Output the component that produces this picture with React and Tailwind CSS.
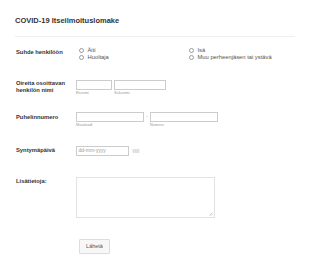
import React from 'react';

const Radio = ({ label }) => (
    <label className="flex items-center h-[7px] gap-[4px]">
        <span className="w-[4.5px] h-[4.5px] rounded-full border-[0.5px] border-[#9a9a9a] bg-white shrink-0" />
        <span className="text-[5.8px] leading-[7px] text-[#555] whitespace-nowrap">{label}</span>
    </label>
);

const Row = ({ label, children, className }) => (
    <div className={`flex ${className}`}>
        <div className="w-[60px] shrink-0 pl-[16px] text-[5.8px] leading-[7px] font-bold text-[#333] whitespace-nowrap">{label}</div>
        {children}
    </div>
);

const Field = ({ w, sub }) => (
    <div className="flex flex-col">
        <div className={`h-[10px] border-[0.5px] border-[#ccc] bg-white ${w}`} />
        <span className="text-[3.8px] leading-[5px] text-[#999] mt-[1px]">{sub}</span>
    </div>
);

export default function App() {
    return (
        <div className="w-[310px] h-[269px] bg-white flex flex-col" style={{ fontFamily: '"Liberation Sans", Arial, sans-serif' }}>
            <h1 className="pl-[15px] pt-[17px] text-[7.5px] leading-[8px] font-bold text-[#333]">COVID-19 Itseilmoituslomake</h1>
            <div className="ml-[15px] mt-[11px] w-[280px] h-px bg-[#eeeeee]" />

            <Row label={<span className="block pt-[1.5px]">Suhde henkilöön</span>} className="mt-[10px] items-start">
                <div className="flex pl-[19px]">
                    <div className="flex flex-col w-[110px]">
                        <Radio label="Äiti" />
                        <Radio label="Huoltaja" />
                    </div>
                    <div className="flex flex-col">
                        <Radio label="Isä" />
                        <Radio label="Muu perheenjäsen tai ystävä" />
                    </div>
                </div>
            </Row>

            <Row label={<>Oireita osoittavan<br />henkilön nimi</>} className="mt-[19px] items-start">
                <div className="flex gap-[2px] pl-[16px]">
                    <Field w="w-[36px]" sub="Etunimi" />
                    <Field w="w-[52px]" sub="Sukunimi" />
                </div>
            </Row>

            <Row label={<span className="block pt-[1.5px]">Puhelinnumero</span>} className="mt-[16px] items-start">
                <div className="flex pl-[16px] items-start">
                    <Field w="w-[68px]" sub="Maakoodi" />
                    <span className="w-[6px] h-[10px] flex items-center justify-center text-[5px] text-[#999]">-</span>
                    <Field w="w-[68px]" sub="Numero" />
                </div>
            </Row>

            <Row label={<span className="block pt-[1px]">Syntymäpäivä</span>} className="mt-[18px] items-start">
                <div className="flex pl-[16px] items-center gap-[2px]">
                    <div className="w-[53px] h-[10px] border-[0.5px] border-[#ccc] flex items-center pl-[1.5px] text-[5px] text-[#999]">dd-mm-yyyy</div>
                    <svg width="8" height="4" viewBox="0 0 8 4" className="ml-[1px]">
                        <line x1="0.5" y1="1" x2="7.5" y2="1" stroke="#aaa" strokeWidth="0.7" />
                        <line x1="0.5" y1="3" x2="7.5" y2="3" stroke="#aaa" strokeWidth="0.7" />
                    </svg>
                </div>
            </Row>

            <Row label={<span className="block pt-[1px]">Lisätietoja:</span>} className="mt-[21px] items-start">
                <div className="pl-[16px]">
                    <div className="relative w-[139px] h-[41px] border border-[#e2e2e2] bg-white">
                        <svg width="4" height="4" viewBox="0 0 4 4" className="absolute right-[1px] bottom-[1px]">
                            <line x1="0.5" y1="3.5" x2="3.5" y2="0.5" stroke="#999" strokeWidth="0.5" />
                            <line x1="2" y1="3.5" x2="3.5" y2="2" stroke="#999" strokeWidth="0.5" />
                        </svg>
                    </div>
                </div>
            </Row>

            <div className="pl-[79px] mt-[21px]">
                <button className="w-[31px] h-[15px] bg-[#f7f7f7] border border-[#dcdcdc] rounded-[1px] text-[5.5px] text-[#555] flex items-center justify-center">Lähetä</button>
            </div>
        </div>
    );
}
